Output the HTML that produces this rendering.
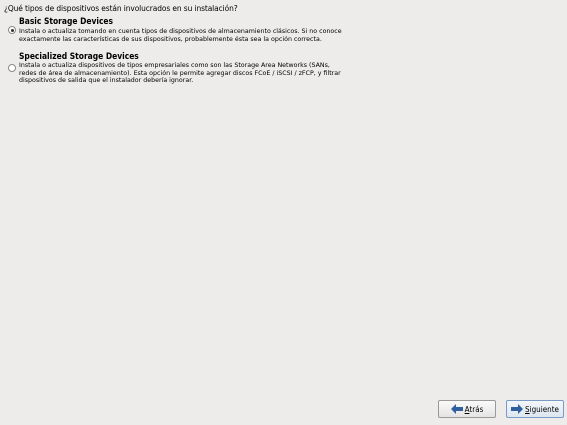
<!DOCTYPE html>
<html><head><style>
body{margin:0;width:567px;height:425px;background:#edeceb;font-family:"DejaVu Sans",sans-serif;color:#000;position:relative;overflow:hidden}
.a{position:absolute;white-space:nowrap}
.h{left:4px;top:3px;font-size:8.3px;font-family:"DejaVu Sans Condensed","DejaVu Sans",sans-serif;letter-spacing:-0.1px}
.t{left:19px;font-size:8.4px;font-weight:bold;font-family:"DejaVu Sans Condensed","DejaVu Sans",sans-serif}
.d{left:19px;font-size:6.3px;line-height:7.7px}
.r{position:absolute;left:8px;width:6px;height:6px;border:1px solid #8a8a8a;border-radius:50%;background:#fff}
.r i{position:absolute;left:1.5px;top:1.5px;width:3px;height:3px;border-radius:50%;background:#333}
.b{position:absolute;top:400px;width:56px;height:16px;border:1px solid #9a9a9a;border-radius:2px;background:linear-gradient(#fafafa,#e4e4e4);font-size:8px;font-family:"DejaVu Sans Condensed","DejaVu Sans",sans-serif;display:flex;align-items:center;justify-content:center;gap:2px}
.b2{border-color:#7a9bc4;background:linear-gradient(#f4f7fb,#dde6f0)}
</style></head><body>
<div class="a h">¿Qué tipos de dispositivos están involucrados en su instalación?</div>
<div class="a t" style="top:16px">Basic Storage Devices</div>
<div class="r" style="top:26px"><i></i></div>
<div class="a d" style="top:28px">Instala o actualiza tomando en cuenta tipos de dispositivos de almacenamiento clásicos. Si no conoce<br>exactamente las características de sus dispositivos, probablemente ésta sea la opción correcta.</div>
<div class="a t" style="top:51px">Specialized Storage Devices</div>
<div class="r" style="top:64px"></div>
<div class="a d" style="top:62px">Instala o actualiza dispositivos de tipos empresariales como son las Storage Area Networks (SANs,<br>redes de área de almacenamiento). Esta opción le permite agregar discos FCoE / iSCSI / zFCP, y filtrar<br>dispositivos de salida que el instalador debería ignorar.</div>
<div class="b" style="left:438px"><svg width="12" height="10" viewBox="0 0 12 10"><path d="M0 5L5 0V3H12V7H5V10Z" fill="#2f5f9e"/></svg><span><u>A</u>trás</span></div>
<div class="b b2" style="left:506px"><svg width="12" height="10" viewBox="0 0 12 10"><path d="M12 5L7 0V3H0V7H7V10Z" fill="#2f5f9e"/></svg><span><u>S</u>iguiente</span></div>
</body></html>
